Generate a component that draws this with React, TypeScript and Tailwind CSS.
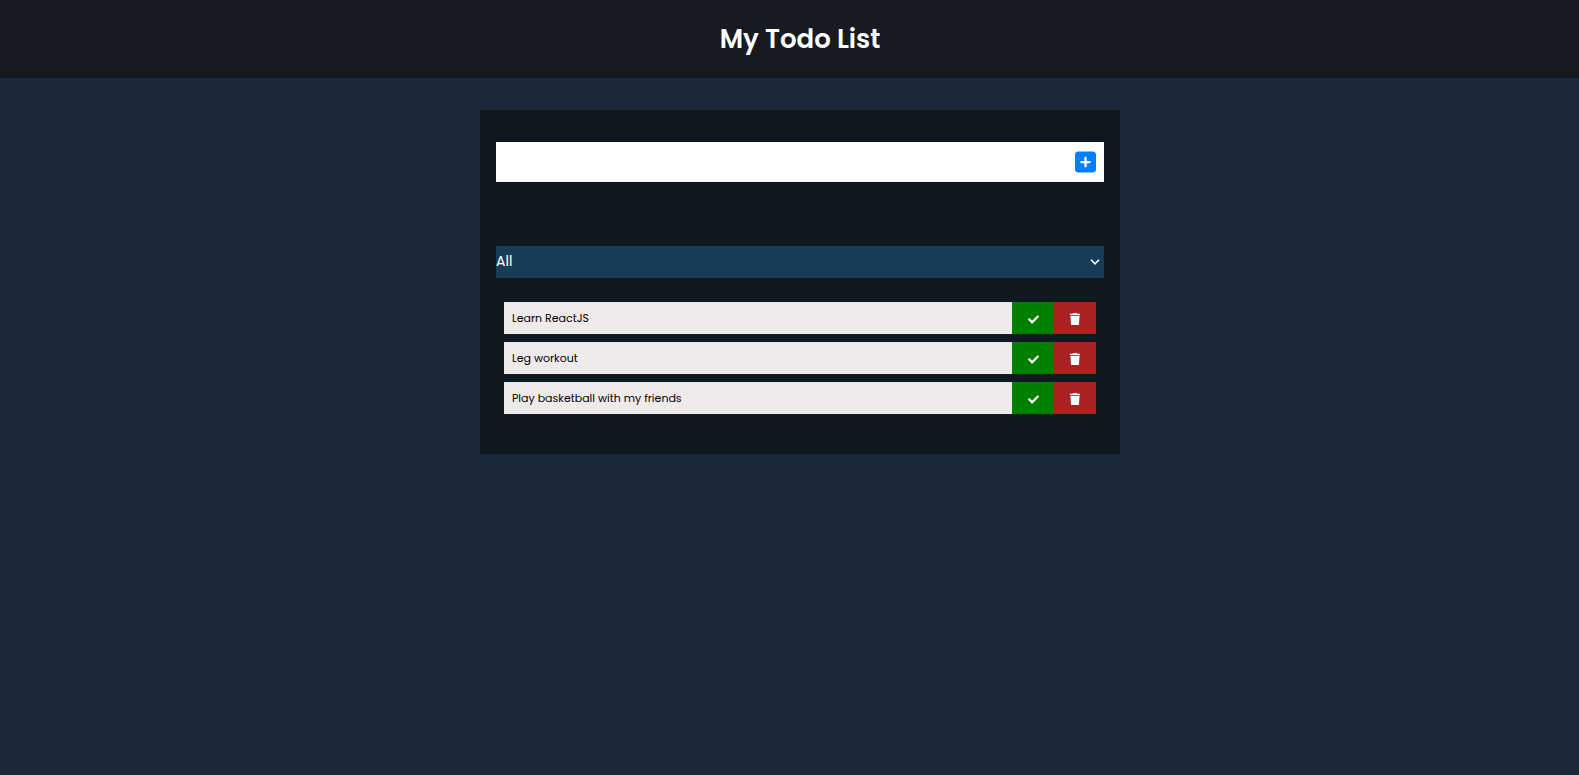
import { useState, type FormEvent } from "react";
import { FaCheck } from "react-icons/fa";
import { FaSquarePlus, FaTrash } from "react-icons/fa6";

type Todo = { id: number; text: string; completed: boolean };

const initialTodos: Todo[] = [
  { id: 1, text: "Learn ReactJS", completed: false },
  { id: 2, text: "Leg workout", completed: false },
  { id: 3, text: "Play basketball with my friends", completed: false },
];

function TodoForm({ onAdd }: { onAdd: (text: string) => void }) {
  const [text, setText] = useState("");

  const submit = (event: FormEvent) => {
    event.preventDefault();
    if (!text.trim()) return;
    onAdd(text.trim());
    setText("");
  };

  return (
    <form onSubmit={submit} className="flex h-10 items-center bg-white pr-2">
      <input
        type="text"
        aria-label="New todo"
        value={text}
        onChange={(event) => setText(event.target.value)}
        className="h-full min-w-0 flex-1 px-2 text-sm text-black outline-none"
      />
      <button type="submit" aria-label="Add todo" className="text-2xl text-[#0080ff]">
        <FaSquarePlus className="w-[21px]" />
      </button>
    </form>
  );
}

function FilterSelect({ value, onChange }: { value: string; onChange: (value: string) => void }) {
  return (
    <div className="relative mt-16 bg-[#153d57]">
      <select
        aria-label="Filter todos"
        value={value}
        onChange={(event) => onChange(event.target.value)}
        className="block h-8 w-full appearance-none bg-[#153d57] pb-0.5 text-sm text-white outline-none"
      >
        <option value="all">All</option>
        <option value="completed">Completed</option>
        <option value="uncompleted">Uncompleted</option>
      </select>
      <svg
        viewBox="0 0 10 6"
        aria-hidden="true"
        className="pointer-events-none absolute top-[13px] right-1 h-1.5 w-2.5 fill-none stroke-white stroke-[1.6]"
      >
        <path d="M1 0.8L5 4.8L9 0.8" />
      </svg>
    </div>
  );
}

function TodoItem({
  todo,
  onToggle,
  onDelete,
}: {
  todo: Todo;
  onToggle: () => void;
  onDelete: () => void;
}) {
  return (
    <li className={todo.completed ? "flex h-8 bg-[#eeeae9] opacity-50" : "flex h-8 bg-[#eeeae9]"}>
      <span className="min-w-0 flex-1 truncate px-2 text-[11px] leading-8 text-black">{todo.text}</span>
      <button
        type="button"
        aria-label={`Complete ${todo.text}`}
        onClick={onToggle}
        className="flex w-[42px] items-center justify-center bg-[#008000] pt-0.5 text-[11px] text-white"
      >
        <FaCheck />
      </button>
      <button
        type="button"
        aria-label={`Delete ${todo.text}`}
        onClick={onDelete}
        className="flex w-[42px] items-center justify-center bg-[#a92222] pt-0.5 text-xs text-white"
      >
        <FaTrash />
      </button>
    </li>
  );
}

export default function App() {
  const [todos, setTodos] = useState(initialTodos);
  const [filter, setFilter] = useState("all");

  const visible = todos.filter(
    (todo) => filter === "all" || (filter === "completed") === todo.completed
  );

  return (
    <div className="min-h-screen bg-[#1b2838] font-['Poppins','Inter',sans-serif]">
      <header className="bg-[#171a21] py-[19px] pl-[21px]">
        <h1 className="text-center text-[26px] leading-10 font-semibold text-white">My Todo List</h1>
      </header>
      <main className="pt-8 pl-[21px]">
        <section className="mx-auto max-w-[640px] bg-[#101820] px-4 pt-8 pb-8">
          <TodoForm onAdd={(text) => setTodos([...todos, { id: Date.now(), text, completed: false }])} />
          <FilterSelect value={filter} onChange={setFilter} />
          <ul className="mt-4 flex flex-col gap-2 p-2">
            {visible.map((todo) => (
              <TodoItem
                key={todo.id}
                todo={todo}
                onToggle={() =>
                  setTodos(todos.map((t) => (t.id === todo.id ? { ...t, completed: !t.completed } : t)))
                }
                onDelete={() => setTodos(todos.filter((t) => t.id !== todo.id))}
              />
            ))}
          </ul>
        </section>
      </main>
    </div>
  );
}
